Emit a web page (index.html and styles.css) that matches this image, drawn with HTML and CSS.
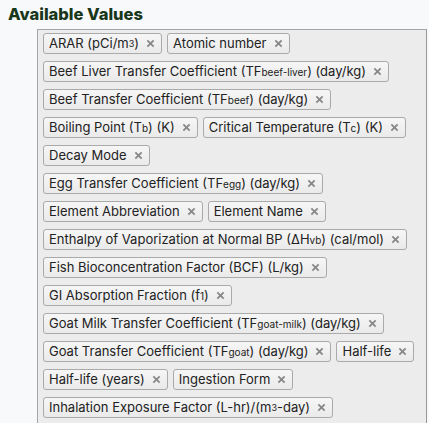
FILE: index.html
```html
<!DOCTYPE html>
<html>
<head>
<meta charset="utf-8">
<link rel="stylesheet" href="styles.css">
</head>
<body>
<h3 class="title">Available Values</h3>
<div class="choices">
  <span class="tag">ARAR (pCi/m<sup>3</sup>)<svg class="x" viewBox="0 0 10 10"><path d="M1.5 1.5L8.5 8.5M8.5 1.5L1.5 8.5"/></svg></span>
  <span class="tag">Atomic number<svg class="x" viewBox="0 0 10 10"><path d="M1.5 1.5L8.5 8.5M8.5 1.5L1.5 8.5"/></svg></span>
  <span class="tag">Beef Liver Transfer Coefficient (TF<sub>beef-liver</sub>) (day/kg)<svg class="x" viewBox="0 0 10 10"><path d="M1.5 1.5L8.5 8.5M8.5 1.5L1.5 8.5"/></svg></span>
  <span class="tag">Beef Transfer Coefficient (TF<sub>beef</sub>) (day/kg)<svg class="x" viewBox="0 0 10 10"><path d="M1.5 1.5L8.5 8.5M8.5 1.5L1.5 8.5"/></svg></span>
  <span class="tag">Boiling Point (T<sub>b</sub>) (K)<svg class="x" viewBox="0 0 10 10"><path d="M1.5 1.5L8.5 8.5M8.5 1.5L1.5 8.5"/></svg></span>
  <span class="tag">Critical Temperature (T<sub>c</sub>) (K)<svg class="x" viewBox="0 0 10 10"><path d="M1.5 1.5L8.5 8.5M8.5 1.5L1.5 8.5"/></svg></span>
  <span class="tag">Decay Mode<svg class="x" viewBox="0 0 10 10"><path d="M1.5 1.5L8.5 8.5M8.5 1.5L1.5 8.5"/></svg></span>
  <span class="tag">Egg Transfer Coefficient (TF<sub>egg</sub>) (day/kg)<svg class="x" viewBox="0 0 10 10"><path d="M1.5 1.5L8.5 8.5M8.5 1.5L1.5 8.5"/></svg></span>
  <span class="tag">Element Abbreviation<svg class="x" viewBox="0 0 10 10"><path d="M1.5 1.5L8.5 8.5M8.5 1.5L1.5 8.5"/></svg></span>
  <span class="tag">Element Name<svg class="x" viewBox="0 0 10 10"><path d="M1.5 1.5L8.5 8.5M8.5 1.5L1.5 8.5"/></svg></span>
  <span class="tag">Enthalpy of Vaporization at Normal BP (ΔH<sub>vb</sub>) (cal/mol)<svg class="x" viewBox="0 0 10 10"><path d="M1.5 1.5L8.5 8.5M8.5 1.5L1.5 8.5"/></svg></span>
  <span class="tag">Fish Bioconcentration Factor (BCF) (L/kg)<svg class="x" viewBox="0 0 10 10"><path d="M1.5 1.5L8.5 8.5M8.5 1.5L1.5 8.5"/></svg></span>
  <span class="tag">GI Absorption Fraction (f<sub>1</sub>)<svg class="x" viewBox="0 0 10 10"><path d="M1.5 1.5L8.5 8.5M8.5 1.5L1.5 8.5"/></svg></span>
  <span class="tag">Goat Milk Transfer Coefficient (TF<sub>goat-milk</sub>) (day/kg)<svg class="x" viewBox="0 0 10 10"><path d="M1.5 1.5L8.5 8.5M8.5 1.5L1.5 8.5"/></svg></span>
  <span class="tag">Goat Transfer Coefficient (TF<sub>goat</sub>) (day/kg)<svg class="x" viewBox="0 0 10 10"><path d="M1.5 1.5L8.5 8.5M8.5 1.5L1.5 8.5"/></svg></span>
  <span class="tag">Half-life<svg class="x" viewBox="0 0 10 10"><path d="M1.5 1.5L8.5 8.5M8.5 1.5L1.5 8.5"/></svg></span>
  <span class="tag">Half-life (years)<svg class="x" viewBox="0 0 10 10"><path d="M1.5 1.5L8.5 8.5M8.5 1.5L1.5 8.5"/></svg></span>
  <span class="tag">Ingestion Form<svg class="x" viewBox="0 0 10 10"><path d="M1.5 1.5L8.5 8.5M8.5 1.5L1.5 8.5"/></svg></span>
  <span class="tag">Inhalation Exposure Factor (L-hr)/(m<sup>3</sup>-day)<svg class="x" viewBox="0 0 10 10"><path d="M1.5 1.5L8.5 8.5M8.5 1.5L1.5 8.5"/></svg></span>
  <span class="tag">Inhalation Form<svg class="x" viewBox="0 0 10 10"><path d="M1.5 1.5L8.5 8.5M8.5 1.5L1.5 8.5"/></svg></span>
  <span class="tag">Ionization Energy (eV)<svg class="x" viewBox="0 0 10 10"><path d="M1.5 1.5L8.5 8.5M8.5 1.5L1.5 8.5"/></svg></span>
</div>
</body>
</html>
```

FILE: styles.css
```css
html, body {
  margin: 0;
  padding: 0;
  background: #f8f9fa;
  font-family: Inter, "Liberation Sans", sans-serif;
  overflow: hidden;
}
.title {
  margin: 0;
  padding: 3px 0 0 8px;
  height: 26px;
  font-size: 16.5px;
  font-weight: 800;
  color: #17361a;
  line-height: 22px;
}
.choices {
  margin-left: 37px;
  width: 390px;
  height: 420px;
  box-sizing: border-box;
  border: 1px solid #a5a5a5;
  border-right-color: #999;
  background: #ececec;
  padding: 3px 0 0 5px;
  display: flex;
  flex-wrap: wrap;
  align-content: flex-start;
  align-items: flex-start;
  column-gap: 5px;
  row-gap: 7px;
}
.tag {
  display: inline-flex;
  align-items: center;
  height: 21px;
  box-sizing: border-box;
  padding: 0 6px 0 5px;
  border: 1px solid #aaa;
  border-radius: 3px;
  background: linear-gradient(#f6f6f6, #eaeaea);
  color: #222;
  font-size: 13px;
  line-height: 13px;
  white-space: nowrap;
}
.tag sub, .tag sup {
  font-size: 10px;
  line-height: 0;
}
.tag sub { vertical-align: -3px; }
.tag sup { vertical-align: 3px; font-size: 9px; }
.x {
  width: 9px;
  height: 9px;
  margin-left: 7px;
  flex: none;
}
.x path {
  stroke: #888;
  stroke-width: 2;
  fill: none;
}
```
